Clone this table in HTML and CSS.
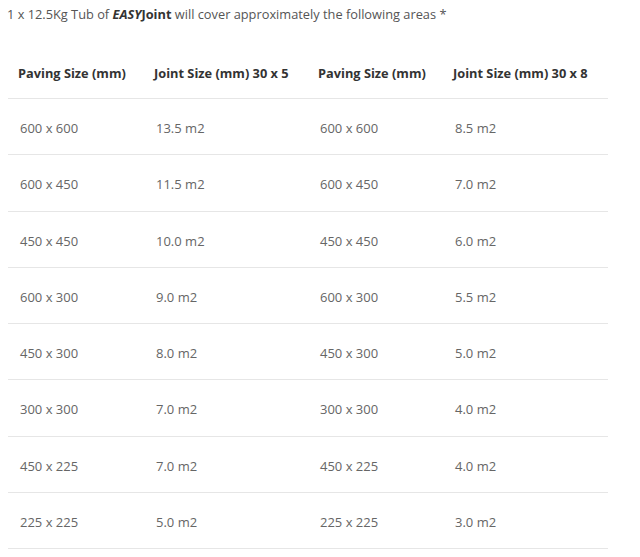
FILE: index.html
```html
<!DOCTYPE html>
<html>
<head>
<meta charset="utf-8">
<link rel="stylesheet" href="styles.css">
</head>
<body>
<div class="page">
  <p class="intro">1 x 12.5Kg Tub of <strong><em>EASY</em>Joint</strong> will cover approximately the following areas *</p>
  <table class="coverage">
    <colgroup>
      <col class="c1"><col class="c2"><col class="c3"><col class="c4">
    </colgroup>
    <thead>
      <tr><th>Paving Size (mm)</th><th>Joint Size (mm) 30 x 5</th><th>Paving Size (mm)</th><th>Joint Size (mm) 30 x 8</th></tr>
    </thead>
    <tbody>
      <tr><td>600 x 600</td><td>13.5 m2</td><td>600 x 600</td><td>8.5 m2</td></tr>
      <tr><td>600 x 450</td><td>11.5 m2</td><td>600 x 450</td><td>7.0 m2</td></tr>
      <tr><td>450 x 450</td><td>10.0 m2</td><td>450 x 450</td><td>6.0 m2</td></tr>
      <tr><td>600 x 300</td><td>9.0 m2</td><td>600 x 300</td><td>5.5 m2</td></tr>
      <tr><td>450 x 300</td><td>8.0 m2</td><td>450 x 300</td><td>5.0 m2</td></tr>
      <tr><td>300 x 300</td><td>7.0 m2</td><td>300 x 300</td><td>4.0 m2</td></tr>
      <tr><td>450 x 225</td><td>7.0 m2</td><td>450 x 225</td><td>4.0 m2</td></tr>
      <tr><td>225 x 225</td><td>5.0 m2</td><td>225 x 225</td><td>3.0 m2</td></tr>
    </tbody>
  </table>
</div>
</body>
</html>
```
FILE: styles.css
```css
html, body {
  margin: 0;
  padding: 0;
  background: #ffffff;
}
.page {
  padding: 5px 8px 0 8px;
  font-family: "Open Sans", "DejaVu Sans", sans-serif;
  color: #555;
}
.intro {
  margin: 0 0 0 -1px;
  font-size: 12.8px;
  line-height: 18px;
  color: #555;
}
.intro strong {
  color: #333;
  font-weight: 700;
}
.coverage {
  border-collapse: collapse;
  width: 600px;
  margin-top: 42px;
  font-size: 13px;
  table-layout: fixed;
}
.c1 { width: 136px; }
.c2 { width: 164px; }
.c3 { width: 135px; }
.c4 { width: 165px; }
.coverage th {
  text-align: left;
  font-weight: 700;
  font-size: 12.8px;
  color: #333;
  line-height: 16px;
  padding: 0 10px 17px 10px;
  border-bottom: 1px solid #e6e6e6;
}
.coverage td {
  text-align: left;
  color: #666;
  line-height: 16px;
  padding: 21px 12px 18.25px 12px;
  border-bottom: 1px solid #e6e6e6;
}
```
